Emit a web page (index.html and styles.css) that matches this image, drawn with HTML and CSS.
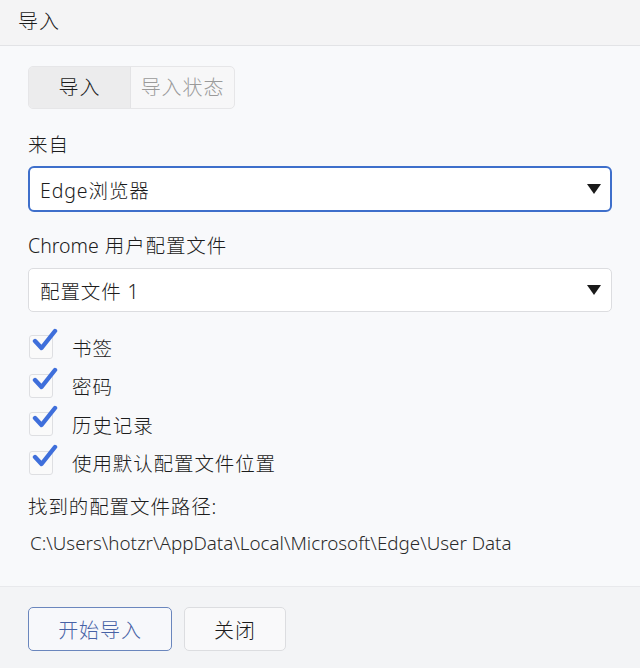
FILE: index.html
```html
<!DOCTYPE html>
<html lang="zh">
<head>
<meta charset="utf-8">
<link rel="stylesheet" href="styles.css">
</head>
<body>
<div class="dialog">
  <header class="titlebar">导入</header>
  <main class="content">
    <div class="tabs">
      <div class="tab active">导入</div>
      <div class="tab">导入状态</div>
    </div>
    <div class="label label-from">来自</div>
    <div class="select focused"><span>Edge浏览器</span><span class="caret"></span></div>
    <div class="label label-profile"><span class="latin">Chrome</span> 用户配置文件</div>
    <div class="select"><span>配置文件 1</span><span class="caret"></span></div>
    <ul class="checks">
      <li><span class="box"><svg viewBox="0 0 26 26" class="tick"><path d="M3 13 L9.5 20 L23 3"/></svg></span>书签</li>
      <li><span class="box"><svg viewBox="0 0 26 26" class="tick"><path d="M3 13 L9.5 20 L23 3"/></svg></span>密码</li>
      <li><span class="box"><svg viewBox="0 0 26 26" class="tick"><path d="M3 13 L9.5 20 L23 3"/></svg></span>历史记录</li>
      <li><span class="box"><svg viewBox="0 0 26 26" class="tick"><path d="M3 13 L9.5 20 L23 3"/></svg></span>使用默认配置文件位置</li>
    </ul>
    <div class="label label-path">找到的配置文件路径:</div>
    <div class="path">C:\Users\hotzr\AppData\Local\Microsoft\Edge\User Data</div>
  </main>
  <footer class="footer">
    <button class="btn primary">开始导入</button>
    <button class="btn">关闭</button>
  </footer>
</div>
</body>
</html>
```
FILE: styles.css
```css
* { box-sizing: border-box; }
html, body { margin: 0; padding: 0; }
body {
  width: 640px;
  height: 668px;
  overflow: hidden;
  background: #f8f9fb;
  font-family: "Noto Sans", "Noto Sans CJK SC", sans-serif;
  font-weight: 300;
  color: #1c1c1c;
  letter-spacing: 0.9px;
}
.latin { letter-spacing: 0; }
.dialog { display: flex; flex-direction: column; height: 668px; }
.titlebar {
  height: 46px;
  background: #f4f4f5;
  border-bottom: 1px solid #e2e3e6;
  font-size: 20px;
  line-height: 44px;
  padding-left: 18px;
}
.content {
  flex: 1;
  padding: 20px 28px 0 28px;
}
.tabs {
  display: flex;
  width: 207px;
  height: 43px;
  border: 1px solid #e6e6e8;
  border-radius: 5px;
  background: #f7f7f8;
  overflow: hidden;
}
.tab {
  font-size: 20px;
  line-height: 41px;
  text-align: center;
  color: #9a9a9a;
  width: 104px;
}
.tab.active {
  width: 103px;
  background: #ececed;
  color: #1c1c1c;
  border-right: 1px solid #e3e3e5;
}
.label {
  font-size: 19.5px;
  line-height: 24px;
}
.label-from { margin-top: 24px; }
.label-profile { margin-top: 22px; }
.select {
  display: flex;
  align-items: center;
  justify-content: space-between;
  width: 584px;
  height: 44px;
  margin-top: 10px;
  padding: 0 10px 0 11px;
  background: #fff;
  border: 1px solid #dcdde0;
  border-radius: 5px;
  font-size: 19.5px;
}
.select.focused {
  height: 46px;
  margin-top: 9px;
  border: 2px solid #3e6fcb;
  border-radius: 6px;
  padding-left: 10px;
  padding-right: 9px;
}
.caret {
  width: 0; height: 0;
  border-left: 7.5px solid transparent;
  border-right: 7.5px solid transparent;
  border-top: 10px solid #1a1a1a;
}
.checks {
  list-style: none;
  margin: 16px 0 0 0;
  padding: 0;
}
.checks li {
  display: flex;
  align-items: center;
  height: 38.5px;
  font-size: 19.5px;
}
.box {
  position: relative;
  width: 24px;
  height: 24px;
  margin: 0 19px 0 1px;
  border: 1px solid #dedfe2;
  border-radius: 3px;
  background: #fafafa;
}
.tick {
  position: absolute;
  left: 2px;
  top: -9px;
  width: 26px;
  height: 28px;
  fill: none;
  stroke: #3f6fdb;
  stroke-width: 4.4;
  stroke-linecap: round;
  stroke-linejoin: round;
}
.label-path { margin-top: 13px; }
.path {
  margin-top: 12px;
  padding-left: 2px;
  font-size: 18.8px;
  letter-spacing: 0;
  color: #2a2a2a;
  line-height: 24px;
}
.footer {
  height: 82px;
  background: #f3f4f6;
  border-top: 1px solid #e8e9ec;
  display: flex;
  gap: 12px;
  align-items: flex-start;
  padding: 20px 0 0 28px;
}
.btn {
  font-family: inherit;
  font-weight: 300;
  font-size: 20px;
  letter-spacing: 0.9px;
  height: 44px;
  border-radius: 5px;
  background: #f9f9fa;
  border: 1px solid #dcdde0;
  color: #1c1c1c;
  width: 102px;
}
.btn.primary {
  width: 144px;
  border: 1.5px solid #6a86bd;
  color: #4762a6;
  background: #f7f8fb;
}
```
